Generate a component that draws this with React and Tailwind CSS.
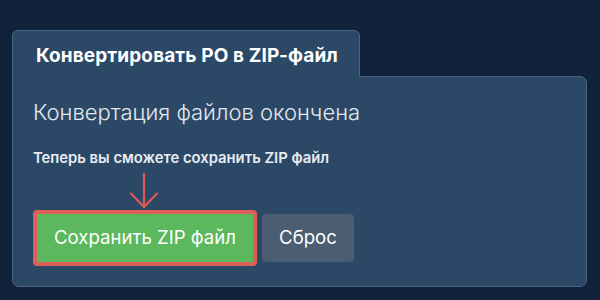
import React from 'react';

const DownArrow = () => (
  <svg width="30" height="36" viewBox="0 0 30 36" fill="none" className="ml-[96px]">
    <path d="M15 1 V34" stroke="#dc5b57" strokeWidth="2.2" strokeLinecap="round" />
    <path d="M2 20.5 L15 34 L28 20.5" stroke="#dc5b57" strokeWidth="2.2" strokeLinecap="round" strokeLinejoin="round" />
  </svg>
);

const App = () => {
  return (
    <div
      className="w-[600px] h-[300px] bg-[#10233a] pt-[30px] pl-[12px] pr-[13px]"
      style={{ fontFamily: 'Inter, "Noto Sans", sans-serif' }}
    >
      <div className="relative z-10 w-[348px] h-[47px] -mb-px bg-[#2c4867] border-x border-t border-[#4b6482] rounded-t-[6px] flex items-center pl-[23px]">
        <h1 className="text-[19px] font-bold text-white tracking-[0.12px] mt-[5px]">Конвертировать PO в ZIP-файл</h1>
      </div>
      <div className="h-[211px] bg-[#2c4867] border border-[#4b6482] rounded-[7px] rounded-tl-none pl-[20px] pt-[20px]">
        <h2 className="text-[22px] font-light text-[#e3e8ef] leading-[30px]">Конвертация файлов окончена</h2>
        <p className="mt-[21px] text-[14.8px] font-semibold text-[#e8ecf1] leading-[20px]">Теперь вы сможете сохранить ZIP файл</p>
        <div className="mt-[5px] h-[37px]">
          <DownArrow />
        </div>
        <div className="flex items-center gap-[5px]">
          <button className="h-[56px] w-[224px] bg-[#5cb85c] border-[4px] border-[#dc5f5a] rounded-[4px] text-[18.6px] text-white">
            Сохранить ZIP файл
          </button>
          <button className="h-[48px] w-[92px] bg-[#4b5d70] rounded-[4px] text-[18.6px] text-white">
            Сброс
          </button>
        </div>
      </div>
    </div>
  );
};

export default App;
